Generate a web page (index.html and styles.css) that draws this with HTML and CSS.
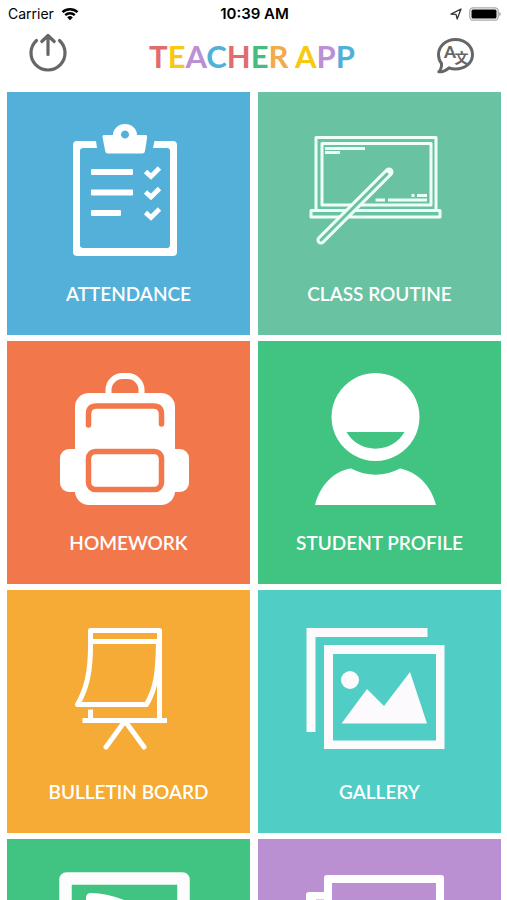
FILE: index.html
```html
<!DOCTYPE html>
<html lang="en">
<head>
<meta charset="utf-8">
<meta name="viewport" content="width=device-width, initial-scale=1">
<title>Teacher App</title>
<link rel="stylesheet" href="styles.css">
</head>
<body>
<div class="status">
  <div class="status-left">
    <span>Carrier</span>
    <svg class="wifi" viewBox="0 0 18 14" aria-hidden="true"><path d="M1.5 5.2a11 11 0 0 1 15 0M4.2 8.2a7 7 0 0 1 9.6 0" fill="none" stroke="#000" stroke-width="2.4"/><path d="M9 13.2 6.2 10.400a4 4 0 0 1 5.600 0z"/></svg>
  </div>
  <time class="clock">10:39 AM</time>
  <div class="status-right">
    <svg class="location" viewBox="0 0 12 12" aria-hidden="true"><path d="M1 6.200 11 1 7.200 11 6 6.400z" fill="none" stroke="#333" stroke-width="1.300" stroke-linejoin="round"/></svg>
    <svg class="battery" viewBox="0 0 32 14" aria-hidden="true"><rect x=".8" y=".8" width="28.400" height="12.400" rx="3.500" fill="#fff" stroke="#aaa" stroke-width="1.300"/><rect x="2.500" y="2.500" width="25" height="9" rx="1.500"/><path d="M30.300 5v4q1.500-.5 1.500-2t-1.500-2z" fill="#999"/></svg>
  </div>
</div>
<header class="nav">
  <button class="nav-button" type="button" aria-label="Log out">
    <svg viewBox="0 0 48 48" fill="none" stroke="#666" stroke-width="3.200" stroke-linecap="round" stroke-linejoin="round"><path d="M12.500 8.500a17 17 0 1 0 23 0M24 22.500V4M17.800 9.500 24 3.500 30.200 9.500"/></svg>
  </button>
  <h1 class="title"><span class="red">T</span><span class="yellow">E</span><span class="purple">A</span><span class="blue">C</span><span class="red">H</span><span class="green">E</span><span class="orange">R</span> <span class="yellow">A</span><span class="purple">P</span><span class="blue">P</span></h1>
  <button class="nav-button" type="button" aria-label="Language">
    <svg viewBox="0 0 48 48"><path d="M9.500 31.500C7 28.500 6.500 25.500 6.500 22.500 6.500 14 14 7.500 23.500 7.500S40.500 14 40.500 22.500 33 37 23.500 37c-2.500 0-4.500-.4-6.500-1.200C14 38.500 10.500 40 6.800 39.800 9 37.500 9.800 35 9.500 31.500z" fill="none" stroke="#666" stroke-width="3" stroke-linejoin="round"/><text class="glyph" x="12" y="26">A</text><text class="glyph glyph-cjk" x="22.500" y="30.500">文</text></svg>
  </button>
</header>
<main class="grid">
  <a class="tile bg-blue" href="#">
    <svg class="art" viewBox="0 0 243 180" aria-hidden="true"><path fill="#fff" d="M89 49H70q-4 0-4 4V160q0 4 4 4H166q4 0 4-4V53q0-4-4-4H147.500L146 56H160q3 0 3 3V153q0 3-3 3H76q-3 0-3-3V59q0-3 3-3H90z"/><path fill="#fff" fill-rule="evenodd" d="M97 43H106a12 11 0 0 1 24 0H138.500q2 0 1.700 2L138 59q-.3 2.500-3 2.500H101q-2.500 0-2.800-2.500L95.500 45q-.3-2 1.500-2zM118 38.500a4 4 0 1 0 .01 0z"/><g fill="#fff"><rect x="84" y="77" width="42" height="6" rx="1"/><rect x="84" y="97.500" width="42" height="6" rx="1"/><rect x="84" y="118" width="30" height="6" rx="1"/></g><path d="M138.500 79.500 144 84.500 152.500 76M138.500 100 144 105 152.500 96.500M138.500 120.500 144 125.500 152.500 117" fill="none" stroke="#fff" stroke-width="4.800"/></svg>
    <span class="label">ATTENDANCE</span>
  </a>
  <a class="tile bg-sage" href="#">
    <svg class="art" viewBox="0 0 243 180" aria-hidden="true"><g fill="none" stroke="#edfff7" stroke-width="3" stroke-linejoin="round"><path d="M58 118V45.500H178V118M64 51.500H173V113H64z"/><rect x="53" y="118.500" width="129" height="6.500"/><path d="M67 56.500h40M67 60.500h15M153.500 103.500h3M159 103.500h10M117.500 108h9.500M130 108h39"/></g><path d="M131 80 63 148" fill="none" stroke="#edfff7" stroke-width="9" stroke-linecap="round"/><path d="M129 82 63 148" fill="none" stroke="#69c3a2" stroke-width="3" stroke-linecap="round"/></svg>
    <span class="label">CLASS ROUTINE</span>
  </a>
  <a class="tile bg-coral" href="#">
    <svg class="art" viewBox="0 0 243 180" aria-hidden="true"><path d="M101.500 54V49a14 14 0 0 1 14-14h5a14 14 0 0 1 14 14v5" fill="none" stroke="#fff" stroke-width="6"/><g fill="#fff"><rect x="68" y="52" width="100" height="112" rx="14"/><rect x="53" y="108" width="129" height="43" rx="9"/></g><g fill="none" stroke="#f2784b" stroke-width="5.500" stroke-linecap="round"><path d="M81.500 84V73q0-8 8-8h57q8 0 8 8v10"/><rect x="81.500" y="110.500" width="73" height="38" rx="7"/></g></svg>
    <span class="label">HOMEWORK</span>
  </a>
  <a class="tile bg-green" href="#">
    <svg class="art" viewBox="0 0 243 180" aria-hidden="true"><path fill="#fff" fill-rule="evenodd" d="M117.500 32a44 44 0 1 0 .01 0zM88.500 91H146.500A33.500 33.500 0 0 1 88.500 91z"/><path fill="#fff" d="M57 164C62 144 76 130 93 127.500Q117.500 140 142 127.500C159 131 173 144 178 164z"/></svg>
    <span class="label">STUDENT PROFILE</span>
  </a>
  <a class="tile bg-amber" href="#">
    <svg class="art" viewBox="0 0 243 180" aria-hidden="true"><g fill="none" stroke="#fff" stroke-width="5" stroke-linejoin="round"><path d="M83.500 53V40.500H152.500V130M83.500 51.500H152M83.500 51C84 83 79 100 70.500 114.500H139.500C149 98 151 84 151.500 51M83.500 119.500V130M75.500 130.500H160"/><path d="M99 157 118 131 137 157" stroke-linecap="round"/></g></svg>
    <span class="label">BULLETIN BOARD</span>
  </a>
  <a class="tile bg-teal" href="#">
    <svg class="art" viewBox="0 0 243 180" aria-hidden="true"><path fill="#fcfafc" fill-rule="evenodd" d="M48.500 38H169.500V47H57.500V142H48.500zM66 55H186.500V159H66zM75 64V150.500H178V64z"/><circle cx="92" cy="90" r="9" fill="#fcfafc"/><path fill="#fcfafc" d="M83.500 133.500 109 99 126 116 152 82 169 133.500z"/></svg>
    <span class="label">GALLERY</span>
  </a>
  <a class="tile bg-green" href="#">
    <svg class="art" viewBox="0 0 243 180" aria-hidden="true"><rect x="58.500" y="39.500" width="118" height="118" rx="1" fill="none" stroke="#fcfcfc" stroke-width="12.500" stroke-linejoin="round"/><path fill="#fff" d="M79 63V59q0-5 5-5 17 0 38 9v8H79z"/></svg>
  </a>
  <a class="tile bg-lilac" href="#">
    <svg class="art" viewBox="0 0 243 180" aria-hidden="true"><path fill="#fff" fill-rule="evenodd" d="M66 53V39q0-3 3-3H183q3 0 3 3V150H48V56q0-3 3-3zM74 44V142H178V44z"/><path d="M58 61h8" stroke="#ba90d2" stroke-width="1"/></svg>
  </a>
</main>
</body>
</html>
```

FILE: styles.css
```css
* { box-sizing: border-box; }

body {
  display: flex;
  flex-direction: column;
  height: 100vh;
  margin: 0;
  overflow: hidden;
  background: #fff;
  color: #000;
  font-family: Lato, "Liberation Sans", sans-serif;
}

.status {
  display: grid;
  grid-template-columns: 1fr auto 1fr;
  align-items: center;
  flex: none;
  height: 28px;
  padding: 0 6px 0 8px;
  font: 14px/20px Inter, "Liberation Sans", sans-serif;
}

.status-left,
.status-right {
  display: flex;
  align-items: center;
  gap: 7px;
}

.status-right { justify-content: flex-end; }
.clock { font-size: 15px; font-weight: 600; }
.wifi { width: 18px; height: 14px; }
.location { width: 12px; height: 12px; }
.battery { width: 32px; height: 14px; }

.nav {
  display: flex;
  align-items: center;
  justify-content: space-between;
  flex: none;
  height: 56px;
  margin-bottom: 8px;
  padding: 0 27px 0 24px;
}

.nav-button {
  width: 48px;
  height: 48px;
  padding: 0;
  border: 0;
  background: none;
}

.nav-button svg { display: block; width: 48px; height: 48px; }

.glyph {
  fill: #666;
  font: 900 17px Lato, sans-serif;
}

.glyph-cjk { font: 700 14px "Noto Sans CJK SC", sans-serif; }

.title {
  margin: 0;
  font-size: 31px;
  font-weight: 700;
  line-height: 44px;
  white-space: nowrap;
}

.red { color: #e06c70; }
.yellow { color: #f6c913; }
.purple { color: #bb90d6; }
.blue { color: #4fb0d8; }
.green { color: #45bd82; }
.orange { color: #f3aa48; }

.grid {
  display: grid;
  grid-template-columns: 1fr 1fr;
  gap: 6px 8px;
  flex: 1;
  align-content: start;
  min-height: 0;
  padding: 0 6px 0 7px;
  overflow-y: auto;
  scrollbar-width: none;
}

.tile {
  display: flex;
  flex-direction: column;
  gap: 10px;
  aspect-ratio: 1;
  color: #fff;
  text-align: center;
  text-decoration: none;
}

.art { display: block; width: 100%; }

.label {
  font-size: 19px;
  font-weight: 600;
  line-height: 24px;
}

.bg-blue { background: #53b1d9; }
.bg-sage { background: #69c3a2; }
.bg-coral { background: #f2784b; }
.bg-green { background: #41c382; }
.bg-amber { background: #f5ab35; }
.bg-teal { background: #50cdc4; }
.bg-lilac { background: #ba90d2; }
```
